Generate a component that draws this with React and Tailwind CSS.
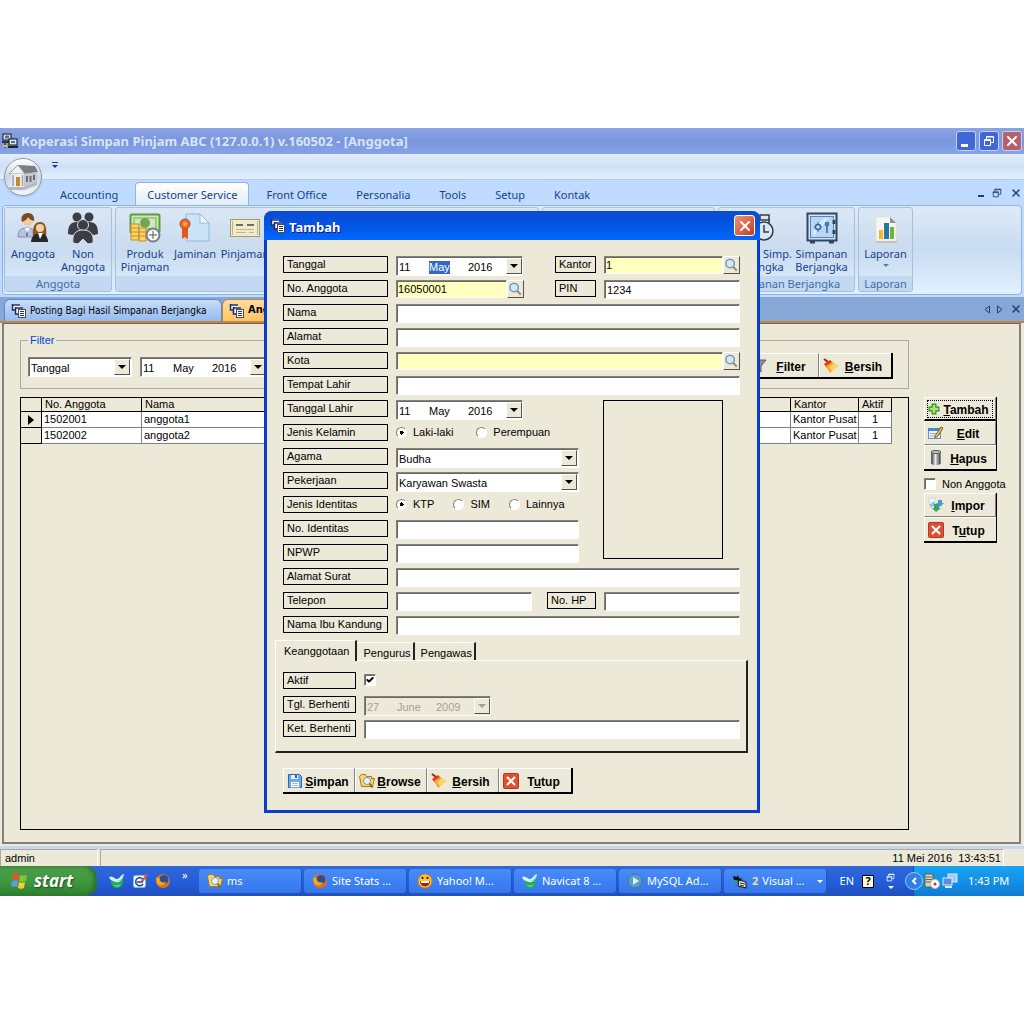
import { useState } from 'react';
import { Check, X } from 'lucide-react';

const ribbonTabs = ['Accounting', 'Customer Service', 'Front Office', 'Personalia', 'Tools', 'Setup', 'Kontak'];

const members = [
  { no: '1502001', nama: 'anggota1', kantor: 'Kantor Pusat', aktif: 1 },
  { no: '1502002', nama: 'anggota2', kantor: 'Kantor Pusat', aktif: 1 },
];

/* ---------- icons ---------- */

function FormsIcon({ className = 'size-4' }) {
  return (
    <svg viewBox="0 0 16 16" className={`shrink-0 ${className}`} aria-hidden="true">
      <path d="M1 1h8v6H1z" fill="#fff" />
      <path d="M1 2h8M1.500 1v6H4" stroke="#1b2a6b" strokeWidth="1.500" fill="none" />
      <path d="M4 4h8v7H4z" fill="#fff" />
      <path d="M4 5h8M4.500 4v7H7" stroke="#1b2a6b" strokeWidth="1.500" fill="none" />
      <rect x="7.500" y="6.500" width="7" height="8" fill="#fff" stroke="#444b60" />
      <path d="M9 8.500h4M9 10.500h4M9 12.500h4" stroke="#333" />
    </svg>
  );
}

function NetworkIcon() {
  return (
    <svg viewBox="0 0 16 16" className="size-4" aria-hidden="true">
      <rect x="1" y="1" width="8" height="6" fill="#e8e4d8" stroke="#111" />
      <rect x="3" y="2.500" width="4" height="3" fill="#3a6fd8" />
      <rect x="0" y="8" width="7" height="2" fill="#333" />
      <rect x="7" y="6" width="8" height="6" fill="#e8e4d8" stroke="#111" />
      <rect x="9" y="8" width="4" height="2" fill="#3a6fd8" />
      <rect x="6" y="13" width="10" height="2" fill="#222" />
      <path d="M3 10v5" stroke="#111" />
      <path d="M1 13h4" stroke="#d9c92b" strokeWidth="2" />
    </svg>
  );
}

function BankIcon() {
  return (
    <svg viewBox="0 0 36 36" className="size-9" aria-hidden="true">
      <path d="M5 14 14 6l16 1 3 6-14 2z" fill="#7b7f85" />
      <path d="M4 15l9-9 7 9z" fill="#f1f2f4" stroke="#9a9ea4" />
      <path d="M6 15h13v13H6z" fill="#eceef0" />
      <path d="M19 15l13-2v11l-13 4z" fill="#c3c8ce" />
      <path d="M11 18h4v9h-4z" fill="#c08a2c" />
      <path d="M8 16v11M17.500 16v11" stroke="#9ba0a6" strokeWidth="1.500" />
      <path d="M22 17v6M25.500 17v6M29 16v5" stroke="#686e76" strokeWidth="2" />
      <path d="M4 28h15l13-5v3l-13 5H4z" fill="#b4b8bd" />
    </svg>
  );
}

function PeopleIcon() {
  return (
    <svg viewBox="0 0 32 32" className="size-8" aria-hidden="true">
      <path d="M1 25c0-7 3-9 9-9s8 3 8 9z" fill="#b9c4dc" stroke="#7f90b5" />
      <path d="M8 16l2 5 3-5z" fill="#fff" />
      <path d="M10 18l1 6-2 0z" fill="#4863a0" />
      <circle cx="11" cy="9" r="5" fill="#f3c9a0" />
      <path d="M5 10c-2-6 2-9 6-9s7 3 6 8c-3-1-5-2-6-4-1 2-3 4-6 5z" fill="#7a4b1e" />
      <path d="M16 26c-1-10 1-16 7-16s7 6 6 16z" fill="#8a5a1c" />
      <circle cx="23" cy="16" r="4" fill="#f6cfa6" />
      <path d="M14 30c0-5 4-9 9-9s8 4 8 9z" fill="#25282c" />
      <path d="M21 21l2 6 3-6z" fill="#fff" />
    </svg>
  );
}

function CrowdIcon() {
  return (
    <svg viewBox="0 0 32 32" className="size-8" fill="#3b3e42" aria-hidden="true">
      <circle cx="10" cy="5" r="4.500" />
      <circle cx="22" cy="5" r="4.500" />
      <path d="M1 22c0-8 2-12 9-12s7 5 6 10L5 23zM31 22c0-8-2-12-9-12s-7 5-6 10l11 3z" />
      <circle cx="16" cy="13" r="5.500" stroke="#cfdff2" />
      <path d="M6 31c-1-8 2-13 10-13s11 5 10 13l-5 1-5-5-5 5z" stroke="#cfdff2" />
    </svg>
  );
}

function MoneyIcon() {
  return (
    <svg viewBox="0 0 32 32" className="size-8" aria-hidden="true">
      <rect x="1.500" y="2.500" width="29" height="18" rx="1" fill="#cfe8b9" stroke="#5f9a45" strokeWidth="2" />
      <rect x="5" y="6" width="22" height="11" fill="none" stroke="#74ad58" />
      <circle cx="16" cy="11" r="5" fill="#6da851" />
      <g fill="#f9d468" stroke="#c98d1e">
        <path d="M2 12h8v16H2zM10 16h7v13h-7z" />
        <path d="M2 16h8M2 20h8M2 24h8M10 20h7M10 24h7" />
      </g>
      <circle cx="24" cy="23" r="6.500" fill="#f6f8fa" stroke="#757d86" strokeWidth="2" />
      <path d="M24 19v8M20 23h8" stroke="#555" />
    </svg>
  );
}

function CertificateIcon() {
  return (
    <svg viewBox="0 0 32 32" className="size-8" aria-hidden="true">
      <path d="M7 2h14l9 9v18H7z" fill="#c9e4f7" stroke="#8dbbe0" />
      <path d="M21 2v9h9z" fill="#fff" stroke="#8dbbe0" />
      <path d="M3 15h6v12l-3-2-3 2z" fill="#e4571c" />
      <circle cx="6" cy="12" r="5" fill="#ec6a2a" stroke="#c5430e" />
      <circle cx="6" cy="12" r="2" fill="#f9ab72" />
    </svg>
  );
}

function ChequeIcon() {
  return (
    <svg viewBox="0 0 32 32" className="size-8" aria-hidden="true">
      <rect x="1.500" y="7.500" width="29" height="17" fill="#f1ebcb" stroke="#a59b6b" />
      <path d="M3.500 9v14M28.500 9v14" stroke="#a9bd86" />
      <path d="M7 13h7M18 13h7" stroke="#444" strokeWidth="1.500" />
      <path d="M7 17.500h18M7 20.500h10M20 20.500h5" stroke="#c1b684" />
    </svg>
  );
}

function ClockSafeIcon() {
  return (
    <svg viewBox="0 0 32 32" className="size-8" fill="none" stroke="#353b45" strokeWidth="1.500" aria-hidden="true">
      <path d="M4 8h24M18 8V3h9v8M4 8v18h10" />
      <circle cx="22" cy="19" r="9" fill="#d9e6f5" />
      <path d="M22 13v7h5" />
    </svg>
  );
}

function SafeIcon() {
  return (
    <svg viewBox="0 0 32 32" className="size-8" fill="none" stroke="#2f4763" aria-hidden="true">
      <rect x="1.500" y="1.500" width="29" height="27" strokeWidth="2" />
      <rect x="4.500" y="4.500" width="23" height="21" fill="#b8d6f2" stroke="#5486b8" />
      <path d="M6 20L18 6h5L8 24z" fill="#d6e8f8" stroke="none" />
      <circle cx="12" cy="15" r="2.500" stroke="#2f66a0" strokeWidth="1.500" />
      <path d="M12 10v2M12 18v2M8 15h1M15 15h1" stroke="#2f66a0" />
      <circle cx="21" cy="12" r="1.500" stroke="#2f66a0" strokeWidth="1.500" />
      <path d="M21 14v7" stroke="#2f66a0" strokeWidth="1.500" />
      <path d="M28 8v4M28 18v4M4 30h5M23 30h5" strokeWidth="3" />
    </svg>
  );
}

function ReportIcon() {
  return (
    <svg viewBox="0 0 32 32" className="size-8" aria-hidden="true">
      <path d="M6 5h14l6 6v18H6z" fill="#f7f6f1" stroke="#dfe0de" />
      <path d="M20 5v6h6z" fill="#8e9296" />
      <rect x="9" y="18" width="4" height="9" fill="#f4b62c" />
      <rect x="14" y="11" width="5" height="16" fill="#2677a8" />
      <rect x="20" y="15" width="4" height="12" fill="#6fb53c" />
      <path d="M6 30h21" stroke="#c3b9ab" strokeWidth="1.500" />
    </svg>
  );
}

function SearchGlass() {
  return (
    <svg viewBox="0 0 16 16" className="size-4" aria-hidden="true">
      <path d="M9.500 9.500l4 4.500" stroke="#9a7f70" strokeWidth="2" />
      <circle cx="6.500" cy="6.500" r="4.500" fill="#cfeaf8" stroke="#7d95a8" strokeWidth="1.500" />
    </svg>
  );
}

function BroomIcon() {
  return (
    <svg viewBox="0 0 16 16" className="size-4" aria-hidden="true">
      <path d="M1 1l4 3" stroke="#a82410" strokeWidth="2" />
      <path d="M1 6l6-4 3 3-6 5z" fill="#dc3d16" />
      <path d="M3 8l6-4 6 4-8 7z" fill="#f9a72c" />
      <path d="M6 9l5-4 4 3-6 5z" fill="#fdd26a" />
    </svg>
  );
}

function CloseIcon() {
  return (
    <svg viewBox="0 0 16 16" className="size-4" aria-hidden="true">
      <rect x="0.500" y="0.500" width="15" height="15" rx="1" fill="#dc5033" stroke="#b03a22" />
      <path d="M4 4l8 8M12 4l-8 8" stroke="#fff" strokeWidth="2" />
    </svg>
  );
}

function SaveIcon() {
  return (
    <svg viewBox="0 0 16 16" className="size-4" aria-hidden="true">
      <path d="M1.500 1.500h11l2 2v11h-13z" fill="#6aa9ea" stroke="#2a66b4" />
      <rect x="4" y="2" width="7" height="4" fill="#e3effb" />
      <rect x="8" y="2" width="2" height="3" fill="#2a66b4" />
      <rect x="3.500" y="8.500" width="9" height="6" fill="#fff" stroke="#79a9dc" />
      <path d="M5 10.500h6M5 12.500h6" stroke="#9cc0e6" />
    </svg>
  );
}

function FolderIcon() {
  return (
    <svg viewBox="0 0 16 16" className="size-4" aria-hidden="true">
      <path d="M0.500 3.500l2-2h4l1 2h5v2h3l-2 8h-11z" fill="#f7d774" stroke="#a87a17" />
      <circle cx="8" cy="8" r="3.500" fill="#e6f5fd" stroke="#7e9ab0" />
      <path d="M10.500 10.500l3 4" stroke="#8a6514" strokeWidth="2" />
    </svg>
  );
}

function PlusIcon() {
  return (
    <svg viewBox="0 0 16 16" className="size-3" aria-hidden="true">
      <path d="M5.500 1.500h5v4h4v5h-4v4h-5v-4h-4v-5h4z" fill="#a5e57c" stroke="#2f8a1f" strokeWidth="1.500" />
    </svg>
  );
}

function EditIcon() {
  return (
    <svg viewBox="0 0 16 16" className="size-4" aria-hidden="true">
      <rect x="0.500" y="3.500" width="12" height="10" fill="#eef4fc" stroke="#6d8fc4" />
      <rect x="0" y="3" width="13" height="3" fill="#4d82cf" />
      <path d="M2 8.500h7M2 11h5" stroke="#8aa8d4" />
      <path d="M7 11l6-9 2 1-5 8-3 2z" fill="#f3c453" stroke="#7b5a2c" />
    </svg>
  );
}

function TrashIcon() {
  return (
    <svg viewBox="0 0 16 16" className="size-4" aria-hidden="true">
      <path d="M3 2h10v12l-2 1H5l-2-1z" fill="#96999b" />
      <path d="M4 3v11M11.500 3v11" stroke="#56595b" strokeWidth="1.500" />
      <path d="M7.500 3v12" stroke="#eceded" strokeWidth="2" />
      <ellipse cx="8" cy="2" rx="5" ry="1.500" fill="#c4c6c7" stroke="#555" />
    </svg>
  );
}

function ImportIcon() {
  return (
    <svg viewBox="0 0 16 16" className="size-4" aria-hidden="true">
      <path d="M1 1h6v5H1z" fill="#f4f6f8" stroke="#cfd6de" />
      <path d="M1 7h3V5h3v4H5l-2 2z" fill="#8fc1ee" />
      <path d="M10 3h4v3h2l-4 4-4-4h2z" fill="#4b96dc" />
      <path d="M6 7h5v4h2l-5 4-4-4h2z" fill="#2fa765" />
    </svg>
  );
}

function FunnelIcon() {
  return (
    <svg viewBox="0 0 16 16" className="size-4" aria-hidden="true">
      <path d="M1 2h14l-5 6v6l-4-2V8z" fill="#8c9197" stroke="#5a5f65" />
    </svg>
  );
}

function FirefoxIcon() {
  return (
    <svg viewBox="0 0 16 16" className="size-4" aria-hidden="true">
      <circle cx="8" cy="8" r="7" fill="#e5701a" />
      <circle cx="9" cy="6.500" r="4.500" fill="#27509c" />
      <path d="M1 5c2-1 4 0 4 2s3 3 6 2c-1 3-5 4-7 3S1 8 1 5z" fill="#f7a823" />
    </svg>
  );
}

function NavicatIcon() {
  return (
    <svg viewBox="0 0 16 16" className="size-4" aria-hidden="true">
      <path d="M2 8c3 1 9 1 12-2 1 5-2 9-6 9s-6-3-6-7z" fill="#1fae57" />
      <path d="M0 4c4-2 5 2 8 2s3-4 7-5c-1 6-4 9-8 8S1 7 0 4z" fill="#d8f5f2" />
      <path d="M8 8c3 0 5-3 6-6-1 5-2 7-6 6z" fill="#57c8d8" />
      <path d="M4 11c2 2 5 2 8 0-1 3-6 4-8 0z" fill="#7be08e" />
    </svg>
  );
}

function DesktopIcon() {
  return (
    <svg viewBox="0 0 16 16" className="size-4" aria-hidden="true">
      <rect x="1.500" y="2.500" width="12" height="12" rx="2" fill="#f0f7fe" stroke="#8fb6de" />
      <path d="M11 6.500a4 4 0 1 0 0 4.500M5 9h6" stroke="#1e4f98" strokeWidth="1.500" fill="none" />
      <path d="M9 8l5-7 2 1-5 7z" fill="#e4572a" />
    </svg>
  );
}

function SmileyIcon() {
  return (
    <svg viewBox="0 0 16 16" className="size-4" aria-hidden="true">
      <circle cx="8" cy="8" r="7" fill="#fbc32c" stroke="#e07b12" />
      <path d="M3 8h10c0 7-10 7-10 0z" fill="#a3201a" />
      <path d="M4 8h8v2H4z" fill="#fff" />
      <circle cx="5.500" cy="5" r="1" />
      <circle cx="10.500" cy="5" r="1" />
    </svg>
  );
}

function PlayIcon() {
  return (
    <svg viewBox="0 0 16 16" className="size-4" aria-hidden="true">
      <circle cx="8" cy="8" r="7" fill="#5a9cc2" stroke="#3a79a6" />
      <path d="M6 4l6 4-6 4z" fill="#d9eef8" />
    </svg>
  );
}

function VisualIcon() {
  return (
    <svg viewBox="0 0 16 16" className="size-4" aria-hidden="true">
      <path d="M1 3l4 1 1-2 1 3 4 1-3 1-1 3-2-3-3 0z" fill="#111" />
      <path d="M7 7l7 2v6l-8-2z" fill="#e9e4cf" stroke="#111" />
      <path d="M8 10l5 1M8 12l4 1" stroke="#333" />
      <circle cx="4" cy="9" r="1.500" fill="#2a9d3f" />
    </svg>
  );
}

function WindowsFlag() {
  return (
    <svg viewBox="0 0 20 20" className="size-5" aria-hidden="true">
      <path d="M3 3c3-2 5-1 6 0L8 9c-2-1-4-1-6 0z" fill="#e8532b" />
      <path d="M10 4c2 1 4 1 7 0l-1 6c-3 1-5 1-7 0z" fill="#84c341" />
      <path d="M2 10c2-1 4-1 6 0l-1 6c-2-1-4-1-6 0z" fill="#5b9bea" />
      <path d="M9 11c2 1 4 1 6 0l-1 6c-2 1-4 1-6 0z" fill="#f8cd2f" />
    </svg>
  );
}

function TrayServerIcon() {
  return (
    <svg viewBox="0 0 16 16" className="size-4" aria-hidden="true">
      <path d="M1 1h8v13H1z" fill="#d9d4c0" stroke="#5c5848" />
      <path d="M2 4h6M2 6.500h6M2 9h6" stroke="#6a6655" />
      <circle cx="11" cy="11" r="4.500" fill="#fff" stroke="#bbb" />
      <circle cx="11" cy="11" r="1.500" fill="#d22" />
    </svg>
  );
}

function TrayNetIcon() {
  return (
    <svg viewBox="0 0 16 16" className="size-4" aria-hidden="true">
      <rect x="6" y="1" width="9" height="8" fill="#9ccaf5" stroke="#dcebfa" />
      <rect x="1" y="5" width="9" height="7" fill="#5a8fd6" stroke="#dcebfa" />
      <path d="M3 14h7" stroke="#dcebfa" strokeWidth="2" />
    </svg>
  );
}

function Restore({ className = 'size-3' }) {
  return (
    <svg viewBox="0 0 12 12" className={className} fill="none" stroke="currentColor" aria-hidden="true">
      <path d="M3.500 4V1.500h7v6H8" />
      <path d="M3 2h8" />
      <path d="M1.500 4.500h6v6h-6zM1 5.500h7" />
    </svg>
  );
}

/* ---------- controls ---------- */

const sunken =
  'border border-t-[#808080] border-l-[#808080] border-r-white border-b-white shadow-[inset_1px_1px_0_#6b6860]';
const raised = 'border border-t-white border-l-white border-r-[#55534b] border-b-[#55534b] bg-[#ece9d8]';

function Arrow() {
  return <span className="size-0 border-x-4 border-t-4 border-x-transparent border-t-current" />;
}

function Label({ htmlFor, className = 'w-[105px]', children }) {
  return (
    <label htmlFor={htmlFor} className={`h-[17px] shrink-0 border border-black pl-[3px] leading-[15px] whitespace-nowrap ${className}`}>
      {children}
    </label>
  );
}

function TextField({ id, className = 'flex-1', ...props }) {
  return <input id={id} type="text" className={`h-[19px] min-w-0 bg-white px-0.5 outline-none ${sunken} ${className}`} {...props} />;
}

function SearchField({ id, className = 'flex-1', label, ...props }) {
  return (
    <div className={`flex h-[18px] min-w-0 ${className}`}>
      <input id={id} type="text" className={`min-w-0 flex-1 bg-[#ffffc0] px-px pt-px outline-none ${sunken}`} {...props} />
      <button type="button" aria-label={label} className={`flex w-[17px] shrink-0 items-center justify-center ${raised}`}>
        <SearchGlass />
      </button>
    </div>
  );
}

function DatePicker({ id, day, month, year, selected, disabled }) {
  const part = `h-4 bg-transparent pt-0.5 outline-none ${disabled ? 'text-[#a5a294]' : ''}`;
  return (
    <div className={`flex h-5 w-[127px] shrink-0 items-center pl-0.5 ${sunken} ${disabled ? 'bg-[#ece9d8]' : 'bg-white'}`}>
      <input id={id} aria-label="Hari" defaultValue={day} disabled={disabled} className={`w-[30px] ${part}`} />
      <input
        aria-label="Bulan"
        defaultValue={month}
        disabled={disabled}
        className={selected ? 'mt-0.5 mr-[18px] h-[13px] w-[21px] bg-[#316ac5] text-white outline-none' : `w-[39px] ${part}`}
      />
      <input aria-label="Tahun" defaultValue={year} disabled={disabled} className={`w-[30px] ${part}`} />
      <button
        type="button"
        aria-label="Pilih tanggal"
        disabled={disabled}
        className={`ml-auto flex h-4 w-4 items-center justify-center ${raised} ${disabled ? 'text-[#a5a294]' : ''}`}
      >
        <Arrow />
      </button>
    </div>
  );
}

function Select({ id, value, className, ...props }) {
  return (
    <div className={`relative h-5 ${className}`}>
      <select id={id} defaultValue={value} className={`h-full w-full appearance-none bg-white pt-0.5 pl-0.5 outline-none ${sunken}`} {...props}>
        <option>{value}</option>
      </select>
      <span className={`pointer-events-none absolute inset-y-0.5 right-0.5 flex w-4 items-center justify-center ${raised}`}>
        <Arrow />
      </span>
    </div>
  );
}

function Radio({ name, children, ...props }) {
  return (
    <label className="flex items-center gap-1.5">
      <input
        type="radio"
        name={name}
        className="size-[11px] appearance-none rounded-full border border-t-[#808080] border-l-[#808080] border-r-white border-b-white bg-white checked:bg-[radial-gradient(circle,#000_2px,#fff_2px)]"
        {...props}
      />
      {children}
    </label>
  );
}

function Checkbox({ id, ...props }) {
  return (
    <span className="relative flex size-3">
      <input id={id} type="checkbox" className={`peer size-3 appearance-none bg-white ${sunken}`} {...props} />
      <Check className="pointer-events-none absolute inset-0.5 hidden size-2 peer-checked:block" strokeWidth={6} />
    </span>
  );
}

function ToolButton({ icon, hot, before = '', rest, className = '' }) {
  return (
    <button
      type="button"
      className={`flex h-6 w-[72px] items-center border-t border-r border-l border-t-white border-r-[#808080] border-l-white bg-[#ece9d8] px-[3px] text-[12px] font-bold last:border-r-0 ${className}`}
    >
      {icon}
      <span className="flex-1 pt-0.5 text-center">
        {before}
        <u>{hot}</u>
        {rest}
      </span>
    </button>
  );
}

function Row({ children }) {
  return <div className="flex h-6 items-start gap-2">{children}</div>;
}

/* ---------- main window ---------- */

function TitleBar() {
  const box = 'flex size-5 items-center justify-center rounded-[3px] border border-[#c3d1f3] text-white';
  return (
    <header className="flex h-[26px] items-center bg-linear-to-b from-[#8aa4e4] via-[#7a96df] to-[#86a4e6] pr-0.5 pl-0.5">
      <NetworkIcon />
      <h1 className="ml-[3px] pt-0.5 font-['Noto_Sans',sans-serif] text-[13px] font-bold whitespace-nowrap text-[#d8e4f8]">
        Koperasi Simpan Pinjam ABC (127.0.0.1) v.160502 - [Anggota]
      </h1>
      <div className="ml-auto flex gap-[3px]">
        <button type="button" aria-label="Minimize" className={`${box} bg-[#4067d8]`}>
          <span className="mt-2 mr-1 h-[3px] w-[7px] bg-white" />
        </button>
        <button type="button" aria-label="Restore" className={`${box} bg-[#4067d8]`}>
          <Restore />
        </button>
        <button type="button" aria-label="Close" className={`${box} bg-[#b5616b]`}>
          <X className="size-4" strokeWidth={3} />
        </button>
      </div>
    </header>
  );
}

function RibbonButton({ icon, lines, menu, className = 'w-[50px]' }) {
  return (
    <button type="button" className={`flex shrink-0 flex-col items-center whitespace-nowrap text-[#15428b] ${className}`}>
      {icon}
      <span className="mt-[3px] flex flex-col leading-[13px]">
        {lines.map((line) => (
          <span key={line}>{line}</span>
        ))}
      </span>
      {menu && <span className="mt-1 size-0 border-x-3 border-t-3 border-x-transparent border-t-[#5a7db0]" />}
    </button>
  );
}

function RibbonGroup({ title, className, children }) {
  return (
    <section
      className={`flex h-[85px] shrink-0 flex-col overflow-hidden rounded-[3px] border border-[#a5c1e2] bg-linear-to-b from-[#dbe7f5] via-[#c9dbef] to-[#dcecfb] ${className}`}
    >
      <div className="flex flex-1 justify-center pt-1">{children}</div>
      <h2 className="h-[15px] bg-[#c2d9f1] text-center leading-[15px] text-[#3e6aaa]">{title}</h2>
    </section>
  );
}

function Ribbon() {
  const [active, setActive] = useState('Customer Service');

  return (
    <div className="relative font-['Noto_Sans',sans-serif] text-[11px]">
      <div className="flex h-[26px] items-start border-b border-[#b0cbef] bg-linear-to-b from-[#e4eefb] via-[#cfe0f6] to-[#e3effd] pl-[52px]">
        <button type="button" aria-label="Quick access" className="mt-2 flex flex-col items-center gap-0.5 text-[#1c3f7c]">
          <span className="h-px w-1.5 bg-current" />
          <span className="size-0 border-x-3 border-t-3 border-x-transparent border-t-current" />
        </button>
      </div>
      <button
        type="button"
        aria-label="Menu utama"
        className="absolute top-1 left-1 flex size-[38px] items-center justify-center rounded-full border border-[#8b9cb5] bg-linear-to-b from-white via-[#cdd6e2] to-[#f4f7fb] shadow"
      >
        <BankIcon />
      </button>

      <nav className="flex h-[25px] items-end gap-[5px] bg-[#bfdbff] pl-12">
        {ribbonTabs.map((tab) => (
          <button
            key={tab}
            type="button"
            onClick={() => setActive(tab)}
            className={`h-[23px] rounded-t border border-b-0 px-[11px] pt-0.5 text-[#15428b] ${active === tab ? 'border-[#8db2e3] bg-linear-to-b from-white to-[#e1ecf8]' : 'border-transparent'}`}
          >
            {tab}
          </button>
        ))}
        <div className="mr-0.5 ml-auto flex h-full items-center gap-2 text-[#1c3f7c]">
          <button type="button" aria-label="Minimize" className="mt-1.5 h-0.5 w-1.5 bg-current" />
          <button type="button" aria-label="Restore">
            <Restore className="size-[10px]" />
          </button>
          <button type="button" aria-label="Close">
            <X className="size-3" strokeWidth={3} />
          </button>
        </div>
      </nav>

      <div className="bg-[#bfdbff] px-0.5 pb-0.5">
        <div className="flex gap-[3px] overflow-hidden rounded border border-[#8db2e3] bg-linear-to-b from-[#dfeaf7] via-[#c8dbf0] to-[#e2f1ff] px-px pt-px pb-0.5">
          <RibbonGroup title="Anggota" className="w-[108px]">
            <RibbonButton icon={<PeopleIcon />} lines={['Anggota']} />
            <RibbonButton icon={<CrowdIcon />} lines={['Non', 'Anggota']} />
          </RibbonGroup>
          <RibbonGroup className="w-[424px]">
            <div className="flex flex-1 pl-1">
              <RibbonButton icon={<MoneyIcon />} lines={['Produk', 'Pinjaman']} />
              <RibbonButton icon={<CertificateIcon />} lines={['Jaminan']} />
              <RibbonButton icon={<ChequeIcon />} lines={['Pinjaman']} />
            </div>
          </RibbonGroup>
          <RibbonGroup className="w-[173px]" />
          <RibbonGroup title="Simpanan Berjangka" className="w-[137px]">
            <RibbonButton icon={<ClockSafeIcon />} lines={['Produk Simp.', 'Berjangka']} className="w-[70px]" />
            <RibbonButton icon={<SafeIcon />} lines={['Simpanan', 'Berjangka']} className="w-[58px]" />
          </RibbonGroup>
          <RibbonGroup title="Laporan" className="w-[55px]">
            <RibbonButton icon={<ReportIcon />} lines={['Laporan']} menu />
          </RibbonGroup>
        </div>
      </div>
    </div>
  );
}

function DocumentTabs() {
  return (
    <nav className="flex h-6 items-end bg-[#87a7d7] pl-1 font-['DejaVu_Sans_Condensed','DejaVu_Sans',sans-serif] text-[10px]">
      <button type="button" className="flex h-[22px] w-[218px] items-center gap-[3px] rounded-t-md border border-b-0 border-[#5f87c4] bg-linear-to-b from-[#c8dcf8] to-[#94bbf0] pl-1.5 whitespace-nowrap">
        <FormsIcon />
        Posting Bagi Hasil Simpanan Berjangka
      </button>
      <button type="button" className="flex h-[22px] w-24 items-center gap-[3px] rounded-t-md border border-b-0 border-[#b98a3f] bg-linear-to-b from-[#ffd9a0] to-[#ffc561] pl-1.5 text-[11px] font-bold">
        <FormsIcon />
        Anggota
      </button>
      <div className="mr-0.5 ml-auto flex h-full items-center gap-[7px] text-[#1c3f7c]">
        <button type="button" aria-label="Sebelumnya">
          <svg viewBox="0 0 6 9" className="h-[9px] w-1.5" fill="none" stroke="currentColor">
            <path d="M5.500 1v7L1 4.500z" />
          </svg>
        </button>
        <button type="button" aria-label="Berikutnya">
          <svg viewBox="0 0 6 9" className="h-[9px] w-1.5" fill="none" stroke="currentColor">
            <path d="M0.500 1v7L5 4.500z" />
          </svg>
        </button>
        <button type="button" aria-label="Tutup tab">
          <X className="size-3" strokeWidth={3} />
        </button>
      </div>
    </nav>
  );
}

function MemberTable() {
  const cell = 'border-r border-b border-[#808080] px-0.5 leading-[15px] h-4';
  const head = 'h-[14px] border-r border-b border-black px-[3px] text-left font-normal leading-[13px]';
  return (
    <div className="min-h-[433px] flex-1 border border-black pr-4">
      <table className="w-full table-fixed border-separate border-spacing-0">
        <thead>
          <tr>
            <th className={`w-[21px] ${head}`} />
            <th className={`w-[100px] ${head}`}>No. Anggota</th>
            <th className={head}>Nama</th>
            <th className={`w-[68px] whitespace-nowrap ${head}`}>Kantor</th>
            <th className={`w-[33px] ${head}`}>Aktif</th>
          </tr>
        </thead>
        <tbody>
          {members.map((m, i) => (
            <tr key={m.no} className="bg-white">
              <td className="h-4 border-r border-b border-black bg-[#ece9d8] p-0 pl-[7px]">
                {i === 0 && <span className="block size-0 border-y-5 border-l-6 border-y-transparent border-l-black" />}
              </td>
              <td className={cell}>{m.no}</td>
              <td className={cell}>{m.nama}</td>
              <td className={`whitespace-nowrap ${cell}`}>{m.kantor}</td>
              <td className={`text-center ${cell}`}>{m.aktif}</td>
            </tr>
          ))}
        </tbody>
      </table>
    </div>
  );
}

function MemberPage() {
  return (
    <main className="border-t-2 border-[#c9853f] bg-[#ece9d8] pr-[3px] pb-0.5 pl-0.5">
      <div className="flex gap-[15px] border-t border-r-2 border-b-2 border-l-2 border-t-[#6b6860] border-r-[#808080] border-b-[#808080] border-l-[#808080] pt-2.5 pr-[11px] pb-3 pl-4">
        <div className="flex min-w-0 flex-1 flex-col">
          <fieldset className="flex h-[55px] items-start gap-2 border border-[#aca899] px-[7px]">
            <legend className="px-0.5 leading-3 text-[#0046d5]">Filter</legend>
            <div className="flex w-full items-start gap-2 pt-[11px]">
              <Select value="Tanggal" className="w-[104px]" aria-label="Filter berdasarkan" />
              <DatePicker id="filter-date" day="11" month="May" year="2016" />
              <div className="-mt-1 mr-2 ml-auto flex border-r-2 border-b-2 border-black">
                <ToolButton icon={<FunnelIcon />} hot="F" rest="ilter" />
                <ToolButton icon={<BroomIcon />} hot="B" rest="ersih" />
              </div>
            </div>
          </fieldset>
          <div className="mt-2 flex">
            <MemberTable />
          </div>
        </div>

        <aside className="w-[84px] pt-[63px]">
          <div className="w-[73px] border-r-2 border-b-2 border-black">
            <ToolButton
              icon={<PlusIcon />}
              hot="T"
              rest="ambah"
              className="border-2 border-black outline-1 -outline-offset-4 outline-dotted outline-black"
            />
            <ToolButton icon={<EditIcon />} hot="E" rest="dit" className="border-b border-b-[#808080]" />
            <ToolButton icon={<TrashIcon />} hot="H" rest="apus" />
          </div>
          <label className="flex h-[22px] items-center gap-1.5 pt-1 whitespace-nowrap">
            <Checkbox />
            Non Anggota
          </label>
          <div className="w-[73px] border-r-2 border-b-2 border-black">
            <ToolButton icon={<ImportIcon />} hot="I" rest="mpor" className="border-b border-b-[#808080]" />
            <ToolButton icon={<CloseIcon />} before="T" hot="u" rest="tup" />
          </div>
        </aside>
      </div>
    </main>
  );
}

function StatusBar() {
  return (
    <footer className="flex h-5 gap-0.5 border-t-3 border-[#c5d9f3] bg-[#ece9d8]">
      <span className="w-[98px] border border-t-[#aca899] border-r-[#fff] border-b-0 border-l-[#aca899] pl-1 leading-4">admin</span>
      <span className="mr-5 flex-1 border border-t-[#aca899] border-r-[#fff] border-b-0 border-l-[#aca899] pr-0.5 text-right leading-4 whitespace-pre">
        11 Mei 2016  13:43:51
      </span>
    </footer>
  );
}

/* ---------- dialog ---------- */

function AddDialog() {
  const [tab, setTab] = useState('Keanggotaan');

  return (
    <div
      role="dialog"
      aria-label="Tambah"
      className="absolute top-[83px] left-1/2 w-[496px] -translate-x-1/2 rounded-t-lg border-x-3 border-b-3 border-[#0c3fc8] bg-[#ece9d8]"
    >
      <header className="-mx-[3px] flex h-[29px] items-center rounded-t-lg bg-linear-to-b from-[#0a4bd0] via-[#0255e4] to-[#0268fb] pr-[5px] pl-1.5">
        <FormsIcon />
        <h2 className="ml-[3px] pt-1 font-['Noto_Sans',sans-serif] text-[13px] font-bold text-white [text-shadow:1px_1px_#0f1089]">Tambah</h2>
        <button
          type="button"
          aria-label="Close"
          className="ml-auto flex size-[21px] items-center justify-center rounded-[3px] border border-white bg-linear-to-br from-[#ee9078] to-[#c83a12] text-white"
        >
          <X className="size-4" strokeWidth={3} />
        </button>
      </header>

      <form className="pt-4 pb-4">
        <div className="pr-[17px] pl-4">
          <Row>
            <Label htmlFor="tanggal">Tanggal</Label>
            <DatePicker id="tanggal" day="11" month="May" year="2016" selected />
            <div className="ml-auto flex gap-2">
              <Label htmlFor="kantor" className="w-[41px]">Kantor</Label>
              <SearchField id="kantor" defaultValue="1" label="Cari kantor" className="w-[136px]" />
            </div>
          </Row>
          <Row>
            <Label htmlFor="no-anggota">No. Anggota</Label>
            <SearchField id="no-anggota" defaultValue="16050001" label="Cari anggota" className="w-32" />
            <div className="ml-auto flex gap-2">
              <Label htmlFor="pin" className="w-[41px]">PIN</Label>
              <TextField id="pin" defaultValue="1234" className="w-[136px]" />
            </div>
          </Row>
          <Row>
            <Label htmlFor="nama">Nama</Label>
            <TextField id="nama" />
          </Row>
          <Row>
            <Label htmlFor="alamat">Alamat</Label>
            <TextField id="alamat" />
          </Row>
          <Row>
            <Label htmlFor="kota">Kota</Label>
            <SearchField id="kota" label="Cari kota" />
          </Row>
          <Row>
            <Label htmlFor="tempat-lahir">Tempat Lahir</Label>
            <TextField id="tempat-lahir" />
          </Row>

          <div className="flex">
            <div className="flex-1">
              <Row>
                <Label htmlFor="tanggal-lahir">Tanggal Lahir</Label>
                <DatePicker id="tanggal-lahir" day="11" month="May" year="2016" />
              </Row>
              <Row>
                <Label>Jenis Kelamin</Label>
                <div className="flex h-[17px] gap-[23px]">
                  <Radio name="kelamin" defaultChecked>Laki-laki</Radio>
                  <Radio name="kelamin">Perempuan</Radio>
                </div>
              </Row>
              <Row>
                <Label htmlFor="agama">Agama</Label>
                <Select id="agama" value="Budha" className="w-[183px]" />
              </Row>
              <Row>
                <Label htmlFor="pekerjaan">Pekerjaan</Label>
                <Select id="pekerjaan" value="Karyawan Swasta" className="w-[183px]" />
              </Row>
              <Row>
                <Label>Jenis Identitas</Label>
                <div className="flex h-[17px] gap-[19px]">
                  <Radio name="identitas" defaultChecked>KTP</Radio>
                  <Radio name="identitas">SIM</Radio>
                  <Radio name="identitas">Lainnya</Radio>
                </div>
              </Row>
              <Row>
                <Label htmlFor="no-identitas">No. Identitas</Label>
                <TextField id="no-identitas" className="w-[183px]" />
              </Row>
              <Row>
                <Label htmlFor="npwp">NPWP</Label>
                <TextField id="npwp" className="w-[183px]" />
              </Row>
            </div>
            <div className="mr-[17px] h-[159px] w-[120px] border border-black" />
          </div>

          <Row>
            <Label htmlFor="alamat-surat">Alamat Surat</Label>
            <TextField id="alamat-surat" />
          </Row>
          <Row>
            <Label htmlFor="telepon">Telepon</Label>
            <TextField id="telepon" className="w-[136px]" />
            <div className="ml-auto flex gap-2">
              <Label htmlFor="hp" className="w-[49px]">No. HP</Label>
              <TextField id="hp" className="w-[136px]" />
            </div>
          </Row>
          <Row>
            <Label htmlFor="ibu">Nama Ibu Kandung</Label>
            <TextField id="ibu" />
          </Row>
        </div>

        <div className="mr-[9px] ml-2">
          <div className="flex h-5 items-end">
            {['Keanggotaan', 'Pengurus', 'Pengawas'].map((name) => (
              <button
                key={name}
                type="button"
                onClick={() => setTab(name)}
                className={`border-t border-r-2 border-t-white border-r-[#222] ${tab === name ? 'z-10 -mb-px h-[21px] border-l border-l-white bg-[#ece9d8] pt-px pr-1.5 pl-2' : 'h-[18px] pt-0.5 pr-0.5 pl-1.5'}`}
              >
                {name}
              </button>
            ))}
          </div>
          <div className="h-[93px] border-t border-r-2 border-b-2 border-l border-t-white border-r-[#222] border-b-[#222] border-l-white pt-[11px] pr-1.5 pl-[7px]">
            <Row>
              <Label htmlFor="aktif" className="w-[73px]">Aktif</Label>
              <div className="pt-0.5">
                <Checkbox id="aktif" defaultChecked />
              </div>
            </Row>
            <Row>
              <Label htmlFor="tgl-berhenti" className="w-[73px]">Tgl. Berhenti</Label>
              <DatePicker id="tgl-berhenti" day="27" month="June" year="2009" disabled />
            </Row>
            <Row>
              <Label htmlFor="ket-berhenti" className="w-[73px]">Ket. Berhenti</Label>
              <TextField id="ket-berhenti" />
            </Row>
          </div>
        </div>

        <div className="mt-[15px] ml-4 flex w-fit border-r-2 border-b-2 border-black">
          <ToolButton icon={<SaveIcon />} hot="S" rest="impan" />
          <ToolButton icon={<FolderIcon />} hot="B" rest="rowse" />
          <ToolButton icon={<BroomIcon />} hot="B" rest="ersih" />
          <ToolButton icon={<CloseIcon />} before="T" hot="u" rest="tup" />
        </div>
      </form>
    </div>
  );
}

/* ---------- taskbar ---------- */

const tasks = [
  { icon: <FolderIcon />, name: 'ms' },
  { icon: <FirefoxIcon />, name: 'Site Stats ...' },
  { icon: <SmileyIcon />, name: 'Yahoo! M...' },
  { icon: <NavicatIcon />, name: 'Navicat 8 ...' },
  { icon: <PlayIcon />, name: 'MySQL Ad...' },
  { icon: <VisualIcon />, name: 'Visual ...', count: 2 },
];

function Taskbar() {
  return (
    <div className="flex h-[30px] bg-linear-to-b from-[#3168d5] via-[#245edb] to-[#1f4fc0] font-['Noto_Sans',sans-serif] text-[11px] text-white">
      <button
        type="button"
        className="flex w-[97px] items-center gap-1 rounded-r-xl bg-linear-to-b from-[#4d9c4a] via-[#3f9a3f] to-[#2f7f2f] pl-2.5 font-['Open_Sans',sans-serif] text-[17px] font-bold italic shadow-[inset_-3px_0_4px_#2b6e2b] [text-shadow:1px_1px_2px_#1c4a1c]"
      >
        <WindowsFlag />
        start
      </button>
      <div className="flex w-[102px] items-center gap-[7px] pl-3">
        <NavicatIcon />
        <DesktopIcon />
        <FirefoxIcon />
        <span className="mb-3 ml-1">»</span>
      </div>
      <div className="flex flex-1 items-center gap-0.5">
        {tasks.map((task) => (
          <button
            key={task.name}
            type="button"
            className="flex h-[25px] max-w-[103px] flex-1 items-center gap-1 rounded-sm bg-linear-to-b from-[#4a8cf6] via-[#3c81f3] to-[#3576ea] pl-2 whitespace-nowrap shadow-[inset_-1px_-1px_0_#2456b8]"
          >
            {task.icon}
            {task.count && <b className="text-[#e9dca8]">{task.count}</b>}
            {task.name}
            {task.count && <span className="mr-1 ml-auto size-0 border-x-3 border-t-3 border-x-transparent border-t-white" />}
          </button>
        ))}
      </div>
      <div className="flex items-center gap-2 pr-2.5 pl-2">
        <span>EN</span>
        <span className="flex h-[13px] w-3 items-center justify-center border border-black bg-[#fffbe0] text-[11px] font-bold text-black">?</span>
        <span className="flex flex-col items-center gap-1 pl-1">
          <Restore className="size-[9px]" />
          <span className="size-0 border-x-3 border-t-3 border-x-transparent border-t-white" />
        </span>
      </div>
      <div className="flex w-[119px] items-center">
        <button
          type="button"
          aria-label="Tampilkan ikon"
          className="z-10 flex size-[18px] items-center justify-center rounded-full border border-[#9cc8f8] bg-[#2f7fe6] font-bold"
        >
          <svg viewBox="0 0 8 8" className="size-2" fill="none" stroke="currentColor" strokeWidth="2">
            <path d="M6 1L3 4l3 3" />
          </svg>
        </button>
        <div className="-ml-2.5 flex h-full flex-1 items-center gap-0.5 border-l border-[#0b4fa8] bg-linear-to-b from-[#1ba4f0] via-[#1290e9] to-[#0f7bd0] pl-2.5">
          <TrayServerIcon />
          <TrayNetIcon />
          <span className="ml-2 whitespace-nowrap">1:43 PM</span>
        </div>
      </div>
    </div>
  );
}

export default function App() {
  return (
    <div className="flex min-h-screen flex-col justify-center bg-white">
      <div className="relative font-['Liberation_Sans',Arial,sans-serif] text-[11px] text-black">
        <TitleBar />
        <Ribbon />
        <DocumentTabs />
        <MemberPage />
        <StatusBar />
        <Taskbar />
        <AddDialog />
      </div>
    </div>
  );
}
